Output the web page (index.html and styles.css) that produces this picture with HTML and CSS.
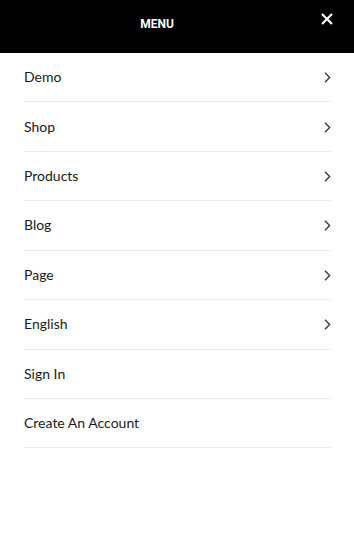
FILE: index.html
```html
<!DOCTYPE html>
<html>
<head>
<meta charset="utf-8">
<link rel="stylesheet" href="styles.css">
</head>
<body>
<div class="drawer">
  <header class="head">
    <span class="title">MENU</span>
    <button class="close" aria-label="Close">
      <svg width="12" height="12" viewBox="0 0 12 12"><path d="M1 1L11 11M11 1L1 11" stroke="#fff" stroke-width="2.2" stroke-linecap="butt"/></svg>
    </button>
  </header>
  <ul class="menu">
    <li class="item"><span>Demo</span><svg class="chev" width="7" height="11" viewBox="0 0 7 11"><path d="M1 0.8L5.6 5.5L1 10.2" fill="none" stroke="#333" stroke-width="1.3"/></svg></li>
    <li class="item"><span>Shop</span><svg class="chev" width="7" height="11" viewBox="0 0 7 11"><path d="M1 0.8L5.6 5.5L1 10.2" fill="none" stroke="#333" stroke-width="1.3"/></svg></li>
    <li class="item"><span>Products</span><svg class="chev" width="7" height="11" viewBox="0 0 7 11"><path d="M1 0.8L5.6 5.5L1 10.2" fill="none" stroke="#333" stroke-width="1.3"/></svg></li>
    <li class="item"><span>Blog</span><svg class="chev" width="7" height="11" viewBox="0 0 7 11"><path d="M1 0.8L5.6 5.5L1 10.2" fill="none" stroke="#333" stroke-width="1.3"/></svg></li>
    <li class="item"><span>Page</span><svg class="chev" width="7" height="11" viewBox="0 0 7 11"><path d="M1 0.8L5.6 5.5L1 10.2" fill="none" stroke="#333" stroke-width="1.3"/></svg></li>
    <li class="item"><span>English</span><svg class="chev" width="7" height="11" viewBox="0 0 7 11"><path d="M1 0.8L5.6 5.5L1 10.2" fill="none" stroke="#333" stroke-width="1.3"/></svg></li>
    <li class="item"><span>Sign In</span></li>
    <li class="item"><span>Create An Account</span></li>
  </ul>
</div>
</body>
</html>
```
FILE: styles.css
```css
html, body {
  margin: 0;
  padding: 0;
  background: #fff;
}
.drawer {
  width: 354px;
  font-family: "Lato", "Noto Sans", sans-serif;
}
.head {
  height: 53px;
  background: #000;
  display: flex;
  align-items: center;
  justify-content: center;
  position: relative;
  box-sizing: border-box;
  padding-right: 40px;
  padding-bottom: 6px;
}
.title {
  color: #fff;
  font-family: "Roboto", sans-serif;
  font-weight: 700;
  font-size: 12px;
}
.close {
  position: absolute;
  right: 21px;
  top: 13px;
  width: 12px;
  height: 12px;
  padding: 0;
  border: 0;
  background: none;
  display: flex;
}
.menu {
  list-style: none;
  margin: 0 23px 0 24px;
  padding: 0;
}
.item {
  height: 48.43px;
  border-bottom: 1px solid #ececec;
  display: flex;
  align-items: center;
  justify-content: space-between;
  font-size: 14px;
  color: #1a1a1a;
}
.item span {
  margin-bottom: 1px;
}
.chev {
  margin-top: 1px;
}
```
